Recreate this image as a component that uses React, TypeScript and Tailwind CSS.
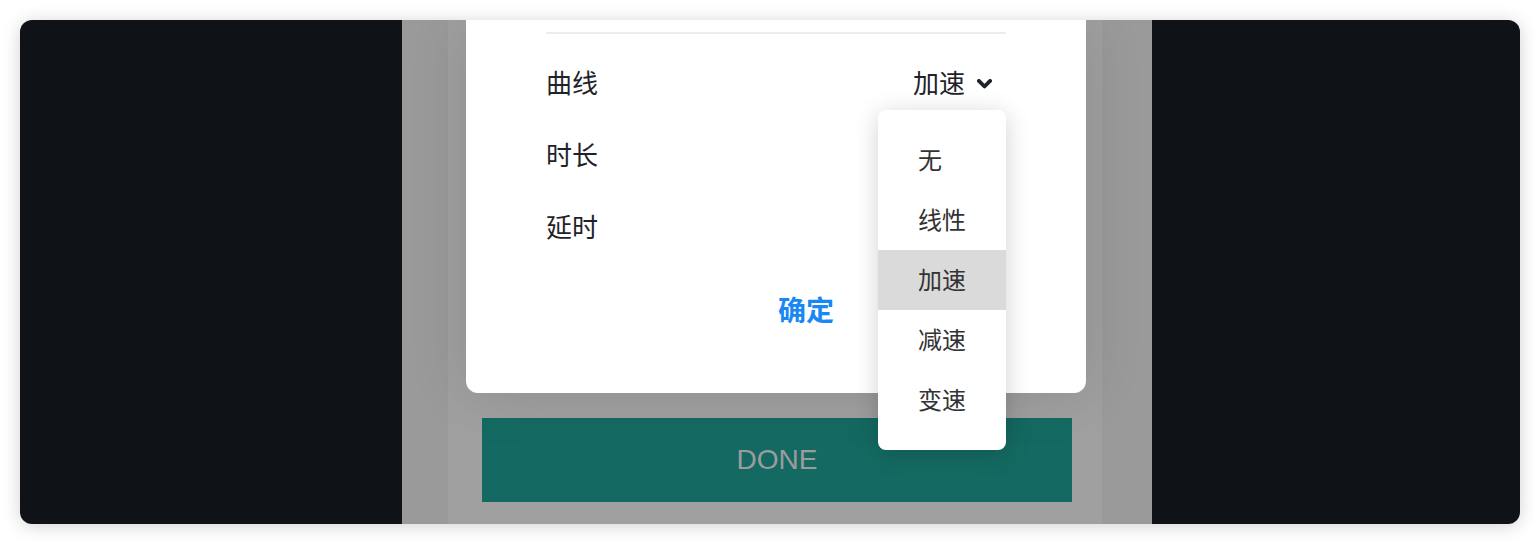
const ROWS = ['曲线', '时长', '延时'];
const OPTIONS = ['无', '线性', '加速', '减速', '变速'];

const CJK = "font-['Noto_Sans_CJK_SC',_'Noto_Sans',_sans-serif]";

function Chevron() {
  return (
    <svg width="15" height="10" viewBox="0 0 15 10" className="mt-[5px]">
      <path d="M1.9 1.9 L7.5 7.5 L13.1 1.9" fill="none" stroke="currentColor" strokeWidth="3.8" strokeLinecap="round" strokeLinejoin="round" />
    </svg>
  );
}

function CurveMenu({ selected }: { selected: string }) {
  return (
    <div className="absolute top-[90px] right-[80px] w-[128px] rounded-lg bg-white py-[20px] shadow-[0_4px_24px_rgba(0,0,0,0.18)]">
      {OPTIONS.map((opt) => (
        <div
          key={opt}
          className={`flex h-[60px] items-center pl-[40px] pb-[2px] text-[24px] text-[#333333] ${
            opt === selected ? 'bg-[#dadada]' : ''
          }`}
        >
          {opt}
        </div>
      ))}
    </div>
  );
}

function AnimationModal() {
  return (
    <div className="relative ml-[18px] h-[373px] w-[620px] rounded-b-xl bg-white px-[80px] pt-[12px] shadow-[0_0_60px_rgba(0,0,0,0.12)]">
      <div className="h-[2px] bg-[#ebebf0]" />

      <div className="mt-[11px]">
        {ROWS.map((label, idx) => (
          <div key={label} className="flex h-[72px] items-center justify-between">
            <span className="text-[26px] text-[#1f2329]">{label}</span>
            {idx === 0 && (
              <span className="flex items-center gap-[12px] pr-[14px] text-[26px] text-[#1f2329]">
                加速
                <Chevron />
              </span>
            )}
          </div>
        ))}
      </div>

      <div className="mt-[32px] flex justify-center pl-[60px]">
        <button className="text-[28px] leading-[32px] font-bold text-[#1a88f3]">确定</button>
      </div>

      <CurveMenu selected="加速" />
    </div>
  );
}

export default function App() {
  return (
    <div className={`min-h-screen bg-white p-[20px] ${CJK}`}>
      <div className="flex h-[504px] overflow-hidden rounded-xl bg-[#0f1217] shadow-[0_2px_18px_rgba(0,0,0,0.18)]">
        <div className="w-[382px]" />

        {/* dimmed phone screen */}
        <div className="flex w-[750px] bg-[#9a9a9a]">
          <div className="w-[46px]" />
          <div className="flex w-[654px] flex-col bg-[#a0a0a0]">
            <AnimationModal />
            <div className="mt-[25px] ml-[34px] flex h-[84px] w-[590px] items-center justify-center bg-[#146a62]">
              <span className="font-['Liberation_Sans',_Arial,_sans-serif] text-[28px] text-[#9c9c9c]">DONE</span>
            </div>
          </div>
          <div className="flex-1" />
        </div>

        <div className="flex-1" />
      </div>
    </div>
  );
}
